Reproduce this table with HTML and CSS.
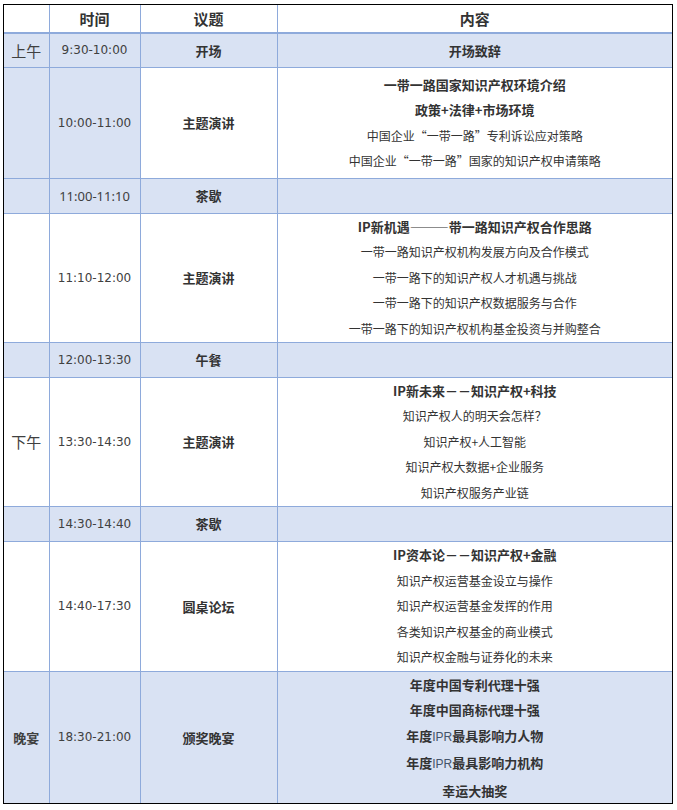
FILE: index.html
```html
<!DOCTYPE html>
<html lang="zh-CN">
<head>
<meta charset="utf-8">
<title>议程</title>
<link rel="stylesheet" href="styles.css">
</head>
<body>
<div class="frame">
<table class="agenda">
<colgroup><col class="c1"><col class="c2"><col class="c3"><col class="c4"></colgroup>
<thead>
<tr class="head"><th></th><th>时间</th><th>议题</th><th>内容</th></tr>
</thead>
<tbody>
<tr class="r-1 shade">
  <td class="period">上午</td><td class="time">9:30-10:00</td><td class="topic">开场</td>
  <td class="content"><div class="b">开场致辞</div></td>
</tr>
<tr class="r-2">
  <td class="period shade-cell"></td><td class="time shade-cell">10:00-11:00</td><td class="topic">主题演讲</td>
  <td class="content">
    <div class="b">一带一路国家知识产权环境介绍</div>
    <div class="b">政策+法律+市场环境</div>
    <div>中国企业“一带一路”专利诉讼应对策略</div>
    <div>中国企业“一带一路”国家的知识产权申请策略</div>
  </td>
</tr>
<tr class="r-short shade">
  <td class="period"></td><td class="time alt">11:00-11:10</td><td class="topic">茶歇</td><td class="content"></td>
</tr>
<tr class="r-4">
  <td class="period"></td><td class="time">11:10-12:00</td><td class="topic">主题演讲</td>
  <td class="content">
    <div class="b">IP新机遇———带一路知识产权合作思路</div>
    <div>一带一路知识产权机构发展方向及合作模式</div>
    <div>一带一路下的知识产权人才机遇与挑战</div>
    <div>一带一路下的知识产权数据服务与合作</div>
    <div>一带一路下的知识产权机构基金投资与并购整合</div>
  </td>
</tr>
<tr class="r-short shade">
  <td class="period"></td><td class="time">12:00-13:30</td><td class="topic">午餐</td><td class="content"></td>
</tr>
<tr class="r-6">
  <td class="period">下午</td><td class="time">13:30-14:30</td><td class="topic">主题演讲</td>
  <td class="content">
    <div class="b">IP新未来－－知识产权+科技</div>
    <div>知识产权人的明天会怎样？</div>
    <div>知识产权+人工智能</div>
    <div>知识产权大数据+企业服务</div>
    <div>知识产权服务产业链</div>
  </td>
</tr>
<tr class="r-short shade">
  <td class="period"></td><td class="time">14:30-14:40</td><td class="topic">茶歇</td><td class="content"></td>
</tr>
<tr class="r-8">
  <td class="period"></td><td class="time">14:40-17:30</td><td class="topic">圆桌论坛</td>
  <td class="content">
    <div class="b">IP资本论－－知识产权+金融</div>
    <div>知识产权运营基金设立与操作</div>
    <div>知识产权运营基金发挥的作用</div>
    <div>各类知识产权基金的商业模式</div>
    <div>知识产权金融与证券化的未来</div>
  </td>
</tr>
<tr class="r-9 shade">
  <td class="period b">晚宴</td><td class="time">18:30-21:00</td><td class="topic">颁奖晚宴</td>
  <td class="content">
    <div class="b">年度中国专利代理十强</div>
    <div class="b">年度中国商标代理十强</div>
    <div class="b">年度<span class="ipr">IPR</span>最具影响力人物</div>
    <div class="b">年度<span class="ipr">IPR</span>最具影响力机构</div>
    <div class="b">幸运大抽奖</div>
  </td>
</tr>
</tbody>
</table>
</div>
</body>
</html>
```

FILE: styles.css
```css
html, body {
  margin: 0;
  background: #ffffff;
}
body {
  padding: 4px 0 0 3px;
  font-family: "Noto Sans CJK SC", "Noto Sans", sans-serif;
  color: #333333;
}
.frame {
  width: 668px;
  border: 1px solid #000000;
}
.agenda {
  width: 668px;
  border-collapse: collapse;
  border-style: hidden;
  table-layout: fixed;
}
.c1 { width: 45px; }
.c2 { width: 91px; }
.c3 { width: 137px; }
.c4 { width: 395px; }
.agenda th,
.agenda td {
  border: 1px solid #8eaadb;
  padding: 0;
  text-align: center;
  vertical-align: middle;
}
.head { height: 28px; }
.head th {
  border-bottom: 2px solid #8eaadb;
  font-size: 15px;
  font-weight: 700;
  line-height: 20px;
  color: #333333;
}
.r-1 { height: 34px; }
.r-short { height: 35px; }
.r-2 { height: 111px; }
.r-4 { height: 129px; }
.r-6 { height: 129px; }
.r-8 { height: 130px; }
.r-9 { height: 130px; }
.shade td,
.shade-cell { background: #d9e2f3; }
.period {
  font-size: 15px;
  color: #404040;
}
.period.b {
  font-size: 13px;
  font-weight: 700;
}
.time {
  font-family: "DejaVu Sans", sans-serif;
  font-size: 12px;
  color: #404040;
}
.time.alt {
  font-family: "Noto Sans", sans-serif;
  font-size: 13px;
}
.topic {
  font-size: 13px;
  font-weight: 700;
  color: #333333;
}
.content {
  font-size: 12px;
  line-height: 25.5px;
  color: #333333;
}
.content .b {
  font-size: 13px;
  font-weight: 700;
}
.ipr {
  font-family: "Liberation Sans Narrow", "Liberation Sans", sans-serif;
  font-weight: 400;
  font-size: 12px;
  color: #44546a;
}
```
